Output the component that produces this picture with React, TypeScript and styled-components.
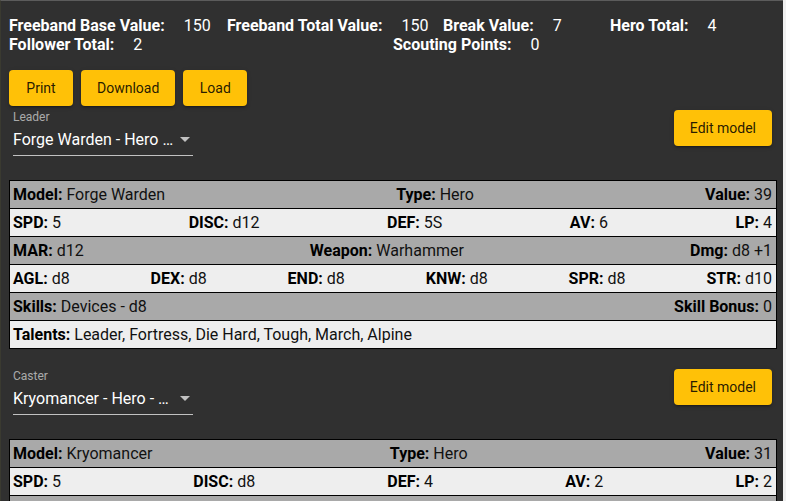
import React from "react";
import styled, { createGlobalStyle } from "styled-components";

const GlobalStyle = createGlobalStyle`
  html, body { margin: 0; padding: 0; background: #f0f0f0; }
  body { font-family: Roboto, "Liberation Sans", sans-serif; }
  #root { width: 783px; }
`;

const Page = styled.div`
  box-sizing: border-box;
  width: 783px;
  min-height: 501px;
  background: #303030;
  border-top: 1px solid #5c5c5c;
  border-left: 1px solid #3a3a30;
  padding: 15px 6px 0 8px;
  color: #fff;
`;

const StatsRow = styled.div`
  display: flex;
  font-size: 16px;
  line-height: 19px;
`;

const Stat = styled.div<{ $width?: number }>`
  display: flex;
  flex: ${(p) => (p.$width ? `0 0 ${p.$width}px` : "0 0 auto")};
  white-space: nowrap;
`;

const StatLabel = styled.span`
  font-weight: 700;
  color: #fff;
`;

const StatValue = styled.span`
  margin-left: 19px;
  color: #fff;
`;

const ButtonRow = styled.div`
  display: flex;
  gap: 8px;
  margin-top: 16px;
`;

const Button = styled.button`
  box-sizing: border-box;
  height: 36px;
  min-width: 64px;
  padding: 0 16px;
  border: none;
  border-radius: 4px;
  background: #ffc107;
  color: rgba(0, 0, 0, 0.87);
  font-family: Roboto, "Liberation Sans", sans-serif;
  font-weight: 400;
  font-size: 14px;
  line-height: 36px;
  cursor: pointer;
  box-shadow: 0px 3px 1px -2px rgba(0, 0, 0, 0.2),
    0px 2px 2px 0px rgba(0, 0, 0, 0.14), 0px 1px 5px 0px rgba(0, 0, 0, 0.12);
`;

const Section = styled.section`
  padding: 4px 0 16px;
`;

const Header = styled.div`
  display: flex;
  justify-content: space-between;
  align-items: flex-start;
  padding: 0 5px 0 4px;
  margin-bottom: 24px;
`;

const Field = styled.div`
  display: flex;
  flex-direction: column;
  width: 180px;
`;

const FieldLabel = styled.label`
  font-size: 12px;
  line-height: 14px;
  color: rgba(255, 255, 255, 0.6);
`;

const SelectBox = styled.div`
  display: flex;
  align-items: center;
  margin-top: 6px;
  padding-bottom: 6px;
  border-bottom: 1px solid rgba(255, 255, 255, 0.7);
`;

const SelectText = styled.span`
  flex: 0 0 162px;
  overflow: hidden;
  white-space: nowrap;
  text-overflow: ellipsis;
  font-size: 16px;
  line-height: 19px;
  color: #fff;
`;

const Arrow = styled.svg`
  margin-left: 5px;
  flex: 0 0 auto;
`;

const Table = styled.div`
  border: 1px solid #000;
  border-bottom: none;
`;

const Row = styled.div<{ $dark?: boolean }>`
  display: flex;
  justify-content: space-between;
  padding: 4px 4px 4px 3px;
  height: 19px;
  background: ${(p) => (p.$dark ? "#a9a9a9" : "#eeeeee")};
  border-bottom: 1px solid #000;
`;

const Cell = styled.span`
  font-size: 16px;
  line-height: 19px;
  color: #111;
  white-space: nowrap;
`;

const Key = styled.b`
  font-weight: 700;
  color: #000;
`;

type Pair = [string, string];

interface ModelData {
  role: string;
  selectText: string;
  rows: Pair[][];
}

const models: ModelData[] = [
  {
    role: "Leader",
    selectText: "Forge Warden - Hero - 39",
    rows: [
      [["Model", "Forge Warden"], ["Type", "Hero"], ["Value", "39"]],
      [["SPD", "5"], ["DISC", "d12"], ["DEF", "5S"], ["AV", "6"], ["LP", "4"]],
      [["MAR", "d12"], ["Weapon", "Warhammer"], ["Dmg", "d8 +1"]],
      [["AGL", "d8"], ["DEX", "d8"], ["END", "d8"], ["KNW", "d8"], ["SPR", "d8"], ["STR", "d10"]],
      [["Skills", "Devices - d8"], ["Skill Bonus", "0"]],
      [["Talents", "Leader, Fortress, Die Hard, Tough, March, Alpine"]],
    ],
  },
  {
    role: "Caster",
    selectText: "Kryomancer - Hero - 31",
    rows: [
      [["Model", "Kryomancer"], ["Type", "Hero"], ["Value", "31"]],
      [["SPD", "5"], ["DISC", "d8"], ["DEF", "4"], ["AV", "2"], ["LP", "2"]],
      [["MAR", "d6"], ["Weapon", "Staff"], ["Dmg", "d6"]],
      [["AGL", "d8"], ["DEX", "d8"], ["END", "d6"], ["KNW", "d10"], ["SPR", "d10"], ["STR", "d6"]],
      [["Skills", "Arcana - d8"], ["Skill Bonus", "0"]],
      [["Talents", "Caster, Frost Ward"]],
    ],
  },
];

const ModelSection: React.FC<{ data: ModelData }> = ({ data }) => (
  <Section>
    <Header>
      <Field>
        <FieldLabel>{data.role}</FieldLabel>
        <SelectBox>
          <SelectText>{data.selectText}</SelectText>
          <Arrow width="10" height="5" viewBox="0 0 10 5">
            <polygon points="0,0 10,0 5,5" fill="rgba(255,255,255,0.7)" />
          </Arrow>
        </SelectBox>
      </Field>
      <Button>Edit model</Button>
    </Header>
    <Table>
      {data.rows.map((row, i) => (
        <Row key={i} $dark={i % 2 === 0}>
          {row.map(([k, v]) => (
            <Cell key={k}>
              <Key>{k}:</Key> {v}
            </Cell>
          ))}
        </Row>
      ))}
    </Table>
  </Section>
);

export default function App() {
  return (
    <>
      <GlobalStyle />
      <Page>
        <StatsRow>
          <Stat $width={218}>
            <StatLabel>Freeband Base Value:</StatLabel>
            <StatValue>150</StatValue>
          </Stat>
          <Stat $width={216}>
            <StatLabel>Freeband Total Value:</StatLabel>
            <StatValue>150</StatValue>
          </Stat>
          <Stat $width={167}>
            <StatLabel>Break Value:</StatLabel>
            <StatValue>7</StatValue>
          </Stat>
          <Stat>
            <StatLabel>Hero Total:</StatLabel>
            <StatValue>4</StatValue>
          </Stat>
        </StatsRow>
        <StatsRow>
          <Stat $width={384}>
            <StatLabel>Follower Total:</StatLabel>
            <StatValue>2</StatValue>
          </Stat>
          <Stat>
            <StatLabel>Scouting Points:</StatLabel>
            <StatValue>0</StatValue>
          </Stat>
        </StatsRow>
        <ButtonRow>
          <Button>Print</Button>
          <Button>Download</Button>
          <Button>Load</Button>
        </ButtonRow>
        {models.map((m) => (
          <ModelSection key={m.role} data={m} />
        ))}
      </Page>
    </>
  );
}
